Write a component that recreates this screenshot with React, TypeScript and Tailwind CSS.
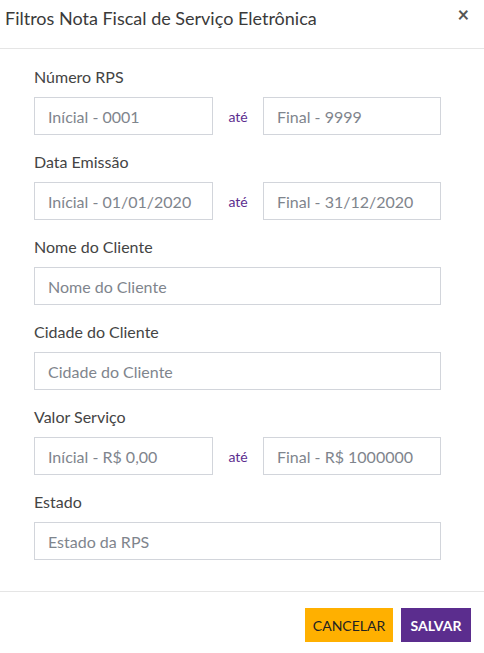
import React from "react";

const font = { fontFamily: "Lato, 'Liberation Sans', sans-serif" };

function Input({ placeholder, className = "" }: { placeholder: string; className?: string }) {
  return (
    <input
      placeholder={placeholder}
      className={`h-[38px] border border-[#d2d5db] bg-white px-[13px] text-[16px] text-[#555] placeholder:text-[#7f858d] outline-none ${className}`}
    />
  );
}

function Range({ label, a, b }: { label: string; a: string; b: string }) {
  return (
    <div className="flex flex-col">
      <div className="h-[30px] text-[16px] leading-[20px] text-[#444]">{label}</div>
      <div className="flex items-center">
        <Input placeholder={a} className="w-[179px]" />
        <span className="w-[50px] text-center text-[14px] text-[#5b2d8e]">até</span>
        <Input placeholder={b} className="w-[178px]" />
      </div>
    </div>
  );
}

function Single({ label, p }: { label: string; p: string }) {
  return (
    <div className="flex flex-col">
      <div className="h-[30px] text-[16px] leading-[20px] text-[#444]">{label}</div>
      <Input placeholder={p} className="w-[407px]" />
    </div>
  );
}

export default function App() {
  return (
    <div className="w-[484px] h-[653px] bg-white" style={font}>
      <div className="relative h-[49px] border-b border-[#e5e5e5] flex items-start pl-[5px] pt-[6px]">
        <h1 className="text-[18px] leading-[24px] text-[#3a3a3a]">Filtros Nota Fiscal de Serviço Eletrônica</h1>
        <span className="absolute right-[15px] top-[3px] text-[20px] font-bold text-[#555] leading-[22px]">×</span>
      </div>
      <div className="pl-[34px] pt-[18px] flex flex-col gap-[17px] h-[543px] border-b border-[#e5e5e5]">
        <Range label="Número RPS" a="Inícial - 0001" b="Final - 9999" />
        <Range label="Data Emissão" a="Inícial - 01/01/2020" b="Final - 31/12/2020" />
        <Single label="Nome do Cliente" p="Nome do Cliente" />
        <Single label="Cidade do Cliente" p="Cidade do Cliente" />
        <Range label="Valor Serviço" a="Inícial - R$ 0,00" b="Final - R$ 1000000" />
        <Single label="Estado" p="Estado da RPS" />
      </div>
      <div className="flex justify-end gap-[8px] pr-[13px] pt-[16px]">
        <button className="h-[34px] w-[88px] bg-[#ffb000] text-[14px] text-[#222] uppercase">Cancelar</button>
        <button className="h-[34px] w-[70px] bg-[#5b2d8e] text-[14px] font-bold text-white uppercase">Salvar</button>
      </div>
    </div>
  );
}
